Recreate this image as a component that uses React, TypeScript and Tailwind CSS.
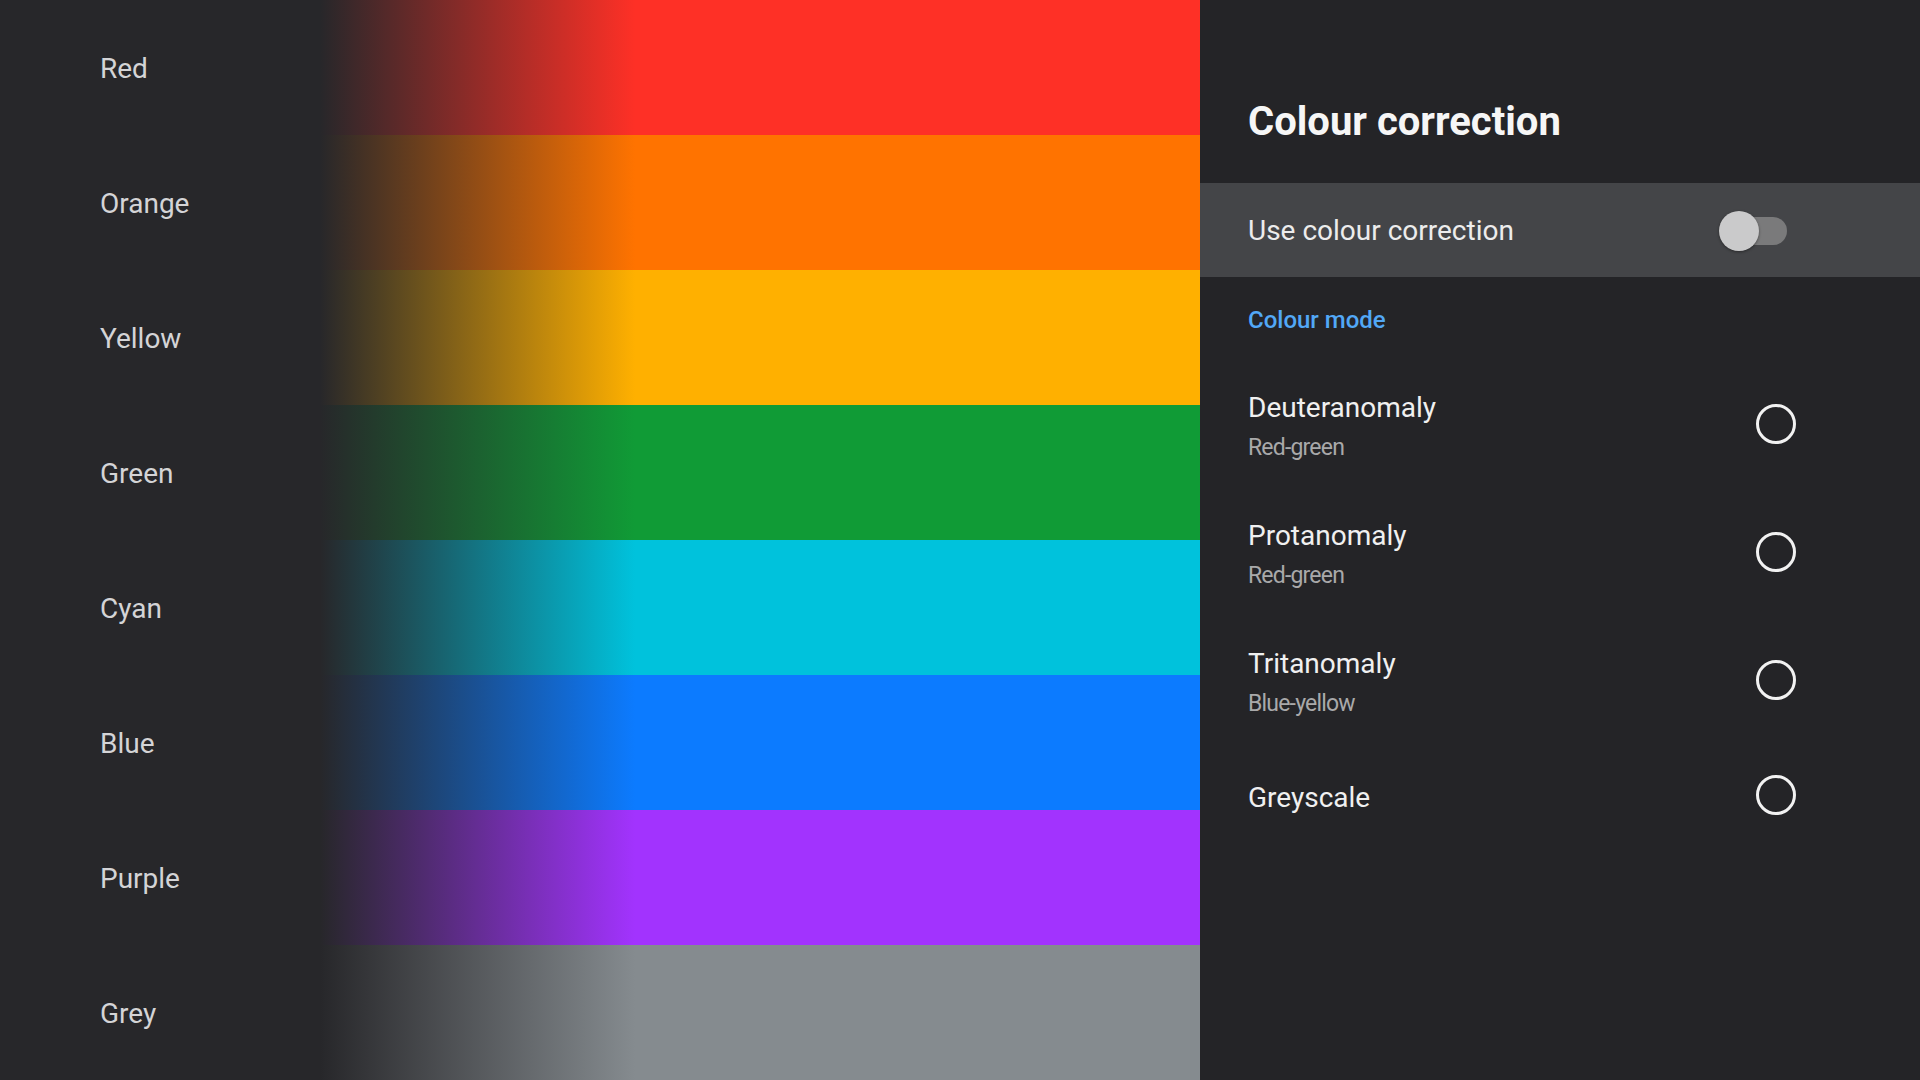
import { useState } from "react";

type Swatch = { name: string; band: string };

// each band fades in from the page background to its full colour
const swatches: Swatch[] = [
  { name: "Red", band: "bg-[linear-gradient(to_right,#27272a_0px,#fe3026_315px)]" },
  { name: "Orange", band: "bg-[linear-gradient(to_right,#27272a_0px,#ff7300_315px)]" },
  { name: "Yellow", band: "bg-[linear-gradient(to_right,#27272a_0px,#ffb000_315px)]" },
  { name: "Green", band: "bg-[linear-gradient(to_right,#27272a_0px,#109b36_315px)]" },
  { name: "Cyan", band: "bg-[linear-gradient(to_right,#27272a_0px,#00c2dc_315px)]" },
  { name: "Blue", band: "bg-[linear-gradient(to_right,#27272a_0px,#0c7bff_315px)]" },
  { name: "Purple", band: "bg-[linear-gradient(to_right,#27272a_0px,#a233fe_315px)]" },
  { name: "Grey", band: "bg-[linear-gradient(to_right,#27272a_0px,#858b8f_315px)]" },
];

type Mode = { id: string; title: string; sub?: string };

const modes: Mode[] = [
  { id: "deut", title: "Deuteranomaly", sub: "Red-green" },
  { id: "prot", title: "Protanomaly", sub: "Red-green" },
  { id: "trit", title: "Tritanomaly", sub: "Blue-yellow" },
  { id: "grey", title: "Greyscale" },
];

function Toggle({ on, onChange }: { on: boolean; onChange: () => void }) {
  return (
    <button onClick={onChange} className="relative w-[68px] h-[42px] flex items-center">
      <span className={`absolute left-[14px] w-[54px] h-[28px] rounded-full ${on ? "bg-[#3d7fc4]" : "bg-[#7a7a7b]"}`} />
      <span
        className={`absolute w-[40px] h-[40px] rounded-full shadow-[0_1px_3px_rgba(0,0,0,0.4)] ${on ? "left-[28px] bg-[#5aaef7]" : "left-0 bg-[#cacacb]"}`}
      />
    </button>
  );
}

function Radio({ checked }: { checked: boolean }) {
  return (
    <span className="mb-[5px] w-[40px] h-[40px] rounded-full border-[3px] border-[#f2f2f2] flex items-center justify-center">
      {checked && <span className="w-[20px] h-[20px] rounded-full bg-[#f2f2f2]" />}
    </span>
  );
}

export default function App() {
  const [enabled, setEnabled] = useState(false);
  const [mode, setMode] = useState("");

  return (
    <div className="w-[1920px] h-[1080px] flex bg-[#27272a] font-['Roboto',sans-serif] overflow-hidden">
      <div className="w-[1200px] flex flex-col">
        {swatches.map(s => (
          <div key={s.name} className="h-[135px] flex">
            <div className="w-[320px] pl-[100px] pt-[2px] flex items-center text-[28px] leading-[34px] text-[#d4d4d6]">{s.name}</div>
            <div className={`flex-1 ${s.band}`} />
          </div>
        ))}
      </div>

      <div className="flex-1 bg-[#242427] flex flex-col">
        <div className="h-[183px] pt-[98px] pl-[48px]">
          <h1 className="text-[40px] leading-[48px] font-bold text-[#f6f6f6]">Colour correction</h1>
        </div>

        <div className="h-[94px] bg-[#444548] pl-[48px] pr-[133px] pt-[2px] flex items-center justify-between">
          <span className="text-[28px] leading-[34px] text-[#ececec]">Use colour correction</span>
          <Toggle on={enabled} onChange={() => setEnabled(v => !v)} />
        </div>

        <div className="pt-[28px] pl-[48px] text-[24px] leading-[30px] font-medium text-[#52a8f6]">Colour mode</div>

        <div className="mt-[56px] pl-[48px] pr-[124px] flex flex-col gap-[57px]">
          {modes.map(m => (
            <div key={m.id} onClick={() => setMode(m.id)} className="flex items-center justify-between cursor-pointer">
              <div className="flex flex-col gap-[9px]">
                <span className="text-[28px] leading-[34px] text-[#f0f0f0]">{m.title}</span>
                {m.sub && <span className="text-[23px] leading-[28px] tracking-[-0.035em] text-[#a9a9aa]">{m.sub}</span>}
              </div>
              <Radio checked={mode === m.id} />
            </div>
          ))}
        </div>
      </div>
    </div>
  );
}
